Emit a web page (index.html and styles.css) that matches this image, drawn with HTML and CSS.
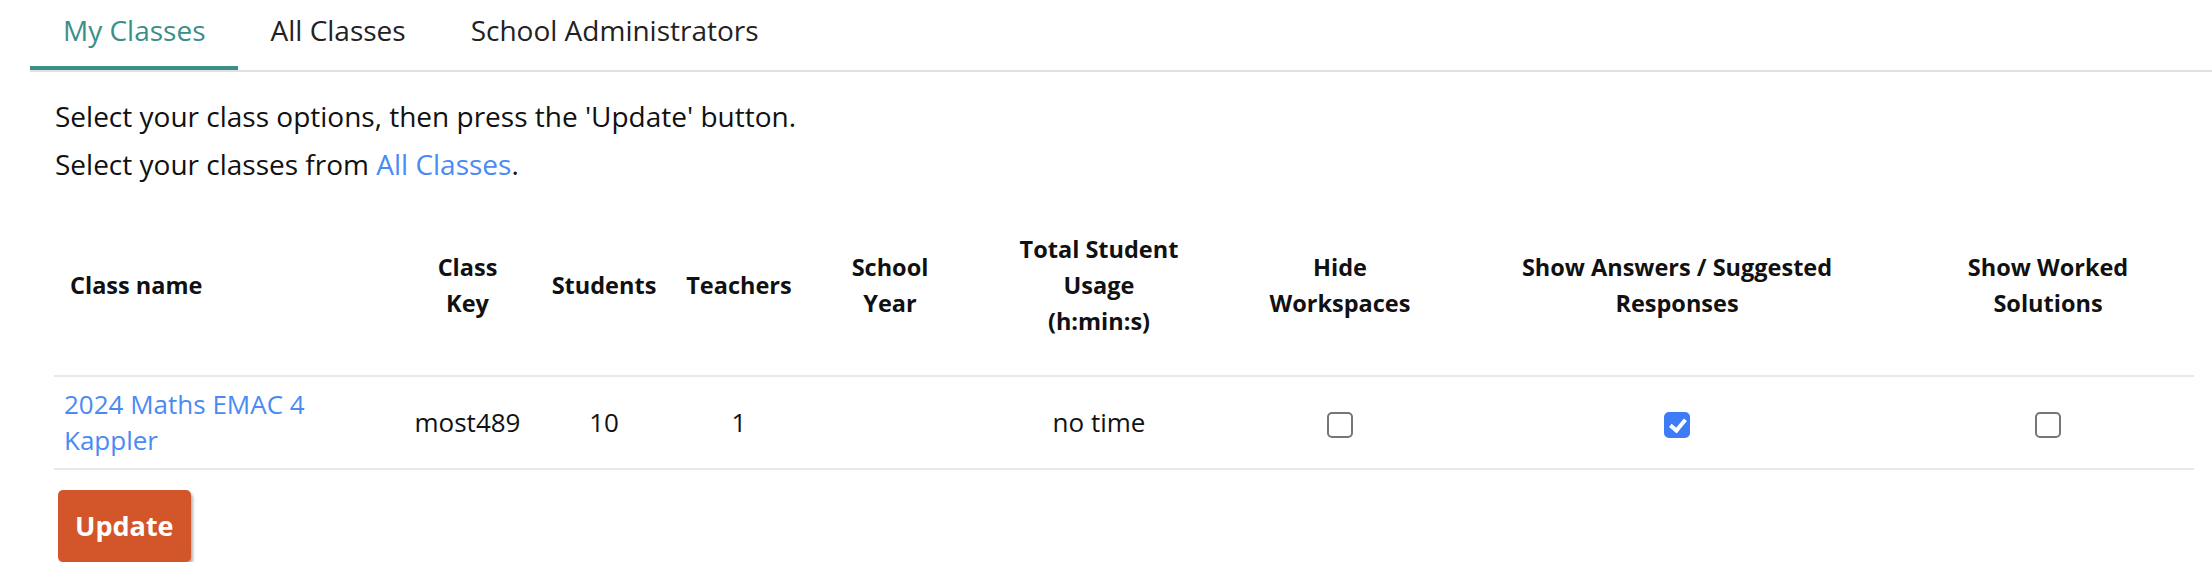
FILE: index.html
```html
<!DOCTYPE html>
<html lang="en">
<head>
<meta charset="utf-8">
<title>My Classes</title>
<link rel="stylesheet" href="styles.css">
</head>
<body>
<div class="page">
  <nav class="tabs">
    <a class="tab tab-active" href="#">My Classes</a>
    <a class="tab" href="#">All Classes</a>
    <a class="tab" href="#">School Administrators</a>
  </nav>
  <section class="content">
    <p class="note">Select your class options, then press the 'Update' button.</p>
    <p class="note">Select your classes from <a class="link" href="#">All Classes</a>.</p>
    <table class="classes">
      <colgroup>
        <col class="c-name">
        <col class="c-key">
        <col class="c-students">
        <col class="c-teachers">
        <col class="c-year">
        <col class="c-usage">
        <col class="c-hide">
        <col class="c-answers">
        <col class="c-worked">
      </colgroup>
      <thead>
        <tr>
          <th class="left">Class name</th>
          <th class="th-key">Class Key</th>
          <th class="th-narrow">Students</th>
          <th class="th-narrow">Teachers</th>
          <th>School Year</th>
          <th class="th-usage">Total Student Usage (h:min:s)</th>
          <th>Hide Workspaces</th>
          <th>Show Answers / Suggested Responses</th>
          <th>Show Worked Solutions</th>
        </tr>
      </thead>
      <tbody>
        <tr>
          <td class="left"><a class="link" href="#">2024 Maths EMAC 4 Kappler</a></td>
          <td>most489</td>
          <td>10</td>
          <td>1</td>
          <td></td>
          <td>no time</td>
          <td><input class="check" type="checkbox"></td>
          <td><input class="check" type="checkbox" checked></td>
          <td><input class="check" type="checkbox"></td>
        </tr>
      </tbody>
    </table>
    <button class="btn-update" type="button">Update</button>
  </section>
</div>
</body>
</html>
```

FILE: styles.css
```css
html, body {
  margin: 0;
  padding: 0;
  background: #ffffff;
}

body {
  font-family: "Open Sans", "Liberation Sans", sans-serif;
  color: #111111;
}

.page {
  padding-left: 30px;
}

.tabs {
  display: flex;
  border-bottom: 2px solid #e0e0e0;
}

.tab {
  display: block;
  padding: 10px 32px 16px 33px;
  font-size: 28px;
  line-height: 40px;
  color: #222222;
  text-decoration: none;
  border-bottom: 4px solid transparent;
}

.tab-active {
  color: #3b8f88;
  border-bottom-color: #3b8f88;
}

.content {
  padding: 20px 18px 0 24px;
}

.note {
  margin: 0;
  font-size: 28px;
  line-height: 48px;
  padding-left: 1px;
}

.link {
  color: #4a8af5;
  text-decoration: none;
}

.classes {
  margin-top: 25px;
  width: 2140px;
  table-layout: fixed;
  border-collapse: collapse;
}

.c-name { width: 341px; }
.c-key { width: 145px; }
.c-students { width: 128px; }
.c-teachers { width: 142px; }
.c-year { width: 160px; }
.c-usage { width: 258px; }
.c-hide { width: 224px; }
.c-answers { width: 450px; }
.c-worked { width: 292px; }

.classes th {
  font-size: 23.5px;
  line-height: 36px;
  font-weight: 700;
  color: #111111;
  text-align: center;
  vertical-align: middle;
  padding: 18px 16px 36px;
  border-bottom: 2px solid #e8e8e8;
}

.classes th.th-key {
  padding-left: 24px;
  padding-right: 24px;
}

.classes th.th-narrow {
  padding-left: 4px;
  padding-right: 4px;
}

.classes th.th-usage {
  padding-left: 46px;
  padding-right: 46px;
}

.classes td {
  font-size: 26px;
  line-height: 36px;
  text-align: center;
  vertical-align: middle;
  padding: 9px 10px 10px;
  border-bottom: 2px solid #e8e8e8;
}

.classes th.left {
  text-align: left;
  padding-left: 16px;
}

.classes td.left {
  text-align: left;
  padding-left: 10px;
}

.check {
  appearance: none;
  -webkit-appearance: none;
  display: inline-block;
  position: relative;
  width: 26px;
  height: 26px;
  margin: 0;
  vertical-align: middle;
  border: 2px solid #767676;
  border-radius: 5px;
  background: #ffffff;
  box-sizing: border-box;
}

.check:checked {
  background: #3d7cf6;
  border-color: #3d7cf6;
}

.check:checked::after {
  content: "";
  position: absolute;
  left: 7px;
  top: 2px;
  width: 6px;
  height: 12px;
  border-right: 4px solid #ffffff;
  border-bottom: 4px solid #ffffff;
  transform: rotate(40deg);
}

.btn-update {
  display: block;
  margin: 20px 0 0 4px;
  padding: 16px 17px;
  font-family: "Open Sans", "Liberation Sans", sans-serif;
  font-size: 27px;
  line-height: 40px;
  font-weight: 700;
  color: #ffffff;
  background: #d3562a;
  border: none;
  border-radius: 5px;
  box-shadow: 2px 3px 3px rgba(0, 0, 0, 0.3);
}
```
